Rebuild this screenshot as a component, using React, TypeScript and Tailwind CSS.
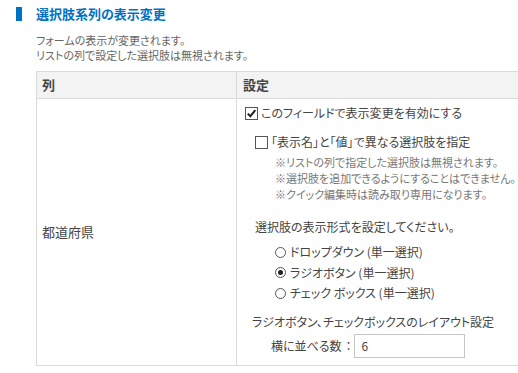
import React from "react"

const CheckBox = ({ checked }: { checked?: boolean }) => (
  <span className="inline-flex items-center justify-center w-[13px] h-[13px] border border-[#555] bg-white shrink-0">
    {checked && (
      <svg width="11" height="11" viewBox="0 0 11 11">
        <path d="M1.8 5.6 L4.3 8.2 L9.3 2.2" fill="none" stroke="#222" strokeWidth="2" />
      </svg>
    )}
  </span>
)

const Radio = ({ checked }: { checked?: boolean }) => (
  <span className="inline-flex items-center justify-center w-[11px] h-[11px] rounded-full border border-[#555] bg-white shrink-0">
    {checked && <span className="w-[5px] h-[5px] rounded-full bg-[#222]" />}
  </span>
)

export default function App() {
  const options = [
    { label: "ドロップダウン (単一選択)", checked: false },
    { label: "ラジオボタン (単一選択)", checked: true },
    { label: "チェック ボックス (単一選択)", checked: false },
  ]

  return (
    <div className="w-[518px] h-[373px] overflow-hidden bg-white text-[#444] font-['Noto_Sans_CJK_JP',sans-serif] [font-feature-settings:'palt']">
      {/* section title */}
      <div className="flex items-center gap-[14px] pl-[16px] pt-[6px] h-[22px]">
        <span className="w-[6px] h-[14px] bg-[#0072c6]" />
        <span className="text-[13px] leading-[16px] font-bold text-[#0072c6]">選択肢系列の表示変更</span>
      </div>

      <div className="pl-[36px] mt-[11px] text-[11px] leading-[15px] text-[#666]">
        <p>フォームの表示が変更されます。</p>
        <p>リストの列で設定した選択肢は無視されます。</p>
      </div>

      <div className="ml-[36px] mt-[8px] w-[500px] border border-[#dadada] text-[12px]">
        <div className="grid grid-cols-[200px_1fr] h-[27px] bg-[#f3f3f3] border-b border-[#dadada] font-bold text-[13px]">
          <div className="flex items-center pl-[5px] border-r border-[#dadada]">列</div>
          <div className="flex items-center pl-[6px]">設定</div>
        </div>
        <div className="grid grid-cols-[200px_1fr] h-[266px]">
          <div className="flex items-center pl-[5px] border-r border-[#dadada] text-[13px]">都道府県</div>
          <div className="pl-[8px] pt-[5px] leading-[18px]">
            <label className="flex items-center gap-[3px]">
              <CheckBox checked />
              <span>このフィールドで表示変更を有効にする</span>
            </label>

            <label className="flex items-center gap-[3px] pl-[10px] mt-[11px]">
              <CheckBox />
              <span>「表示名」と「値」で異なる選択肢を指定</span>
            </label>
            <div className="pl-[30px] mt-[3px] text-[11px] leading-[16px] text-[#777]">
              <p>※リストの列で指定した選択肢は無視されます。</p>
              <p>※選択肢を追加できるようにすることはできません。</p>
              <p>※クイック編集時は読み取り専用になります。</p>
            </div>

            <p className="pl-[10px] mt-[16px]">選択肢の表示形式を設定してください。</p>
            <div className="pl-[30px] mt-[6px] flex flex-col">
              {options.map((o) => (
                <label key={o.label} className="flex items-center gap-[4px] h-[20.5px]">
                  <Radio checked={o.checked} />
                  <span>{o.label}</span>
                </label>
              ))}
            </div>

            <p className="pl-[7px] mt-[9px]">ラジオボタン、チェックボックスのレイアウト設定</p>
            <div className="flex items-center pl-[26px] mt-[3px]">
              <span>横に並べる数</span>
              <span className="ml-[4px] mr-[2px]">：</span>
              <div className="w-[111px] h-[24px] border border-[#c6c6c6] flex items-center pl-[7px]">6</div>
            </div>
          </div>
        </div>
      </div>
    </div>
  )
}
